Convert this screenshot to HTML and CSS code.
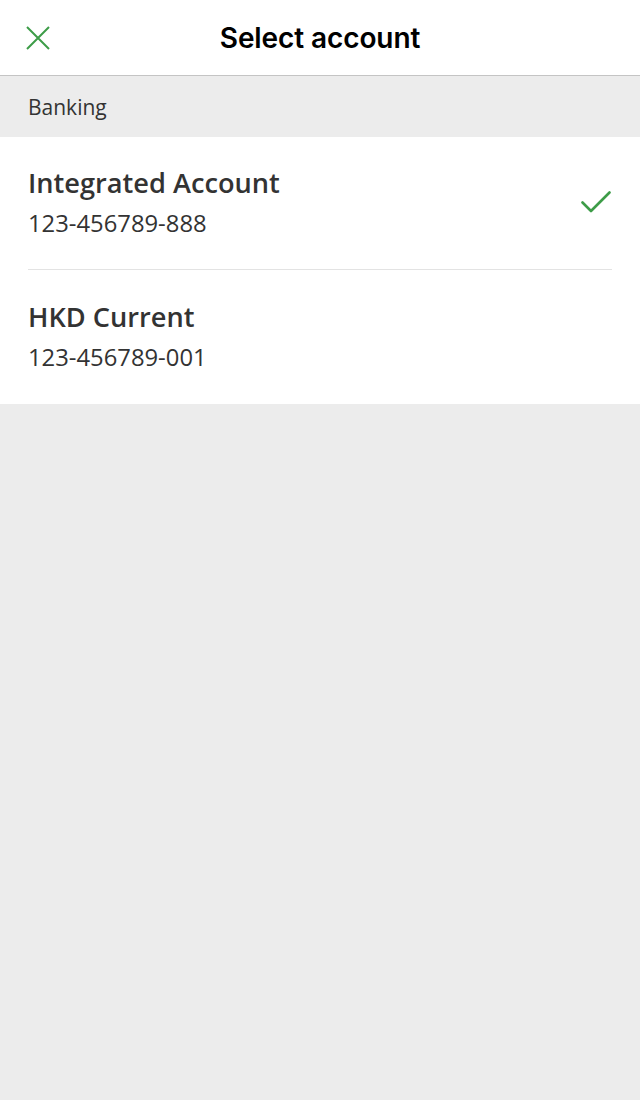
FILE: index.html
```html
<!DOCTYPE html>
<html lang="en">
<head>
<meta charset="utf-8">
<title>Select account</title>
<link rel="stylesheet" href="styles.css">
</head>
<body>
<div class="app">
  <header class="topbar">
    <button class="close" aria-label="Close">
      <svg width="24" height="24" viewBox="0 0 24 24"><path d="M1 1 L23 23 M23 1 L1 23" stroke="#3d9c48" stroke-width="2" fill="none"/></svg>
    </button>
    <h1 class="title">Select account</h1>
  </header>
  <div class="section-label">Banking</div>
  <ul class="accounts">
    <li class="account">
      <div class="info">
        <div class="name">Integrated Account</div>
        <div class="number">123-456789-888</div>
      </div>
      <svg class="check" width="30" height="24" viewBox="0 0 30 24"><path d="M1.5 11.5 L10 20 L28.5 1.5" stroke="#3d9c48" stroke-width="2.6" fill="none" stroke-linecap="round" stroke-linejoin="round"/></svg>
    </li>
    <li class="account">
      <div class="info">
        <div class="name">HKD Current</div>
        <div class="number">123-456789-001</div>
      </div>
    </li>
  </ul>
</div>
</body>
</html>
```
FILE: styles.css
```css
* { box-sizing: border-box; }
html, body { margin: 0; padding: 0; }
body {
  background: #ececec;
  width: 640px;
  height: 1100px;
  font-family: "Open Sans", "Noto Sans", sans-serif;
  color: #333333;
}
.topbar {
  position: relative;
  height: 76px;
  background: #ffffff;
  border-bottom: 1px solid #c4c4c4;
  display: flex;
  align-items: center;
  justify-content: center;
}
.close {
  position: absolute;
  left: 26px;
  top: 26px;
  width: 24px;
  height: 24px;
  padding: 0;
  border: 0;
  background: none;
  display: flex;
}
.title {
  margin: 0;
  font-family: Inter, Roboto, sans-serif;
  font-weight: 600;
  font-size: 28px;
  color: #000000;
  letter-spacing: -0.1px;
}
.section-label {
  height: 61px;
  padding-left: 28px;
  display: flex;
  align-items: center;
  font-size: 21px;
  font-weight: 500;
  color: #333333;
}
.accounts {
  list-style: none;
  margin: 0;
  padding: 0 28px;
  background: #ffffff;
}
.account {
  height: 133px;
  display: flex;
  align-items: center;
  justify-content: space-between;
  border-bottom: 1px solid #e3e3e3;
}
.account:last-child { border-bottom: 0; height: 134px; }
.info {
  display: flex;
  flex-direction: column;
  gap: 6px;
  margin-top: -2px;
}
.name {
  font-size: 27.2px;
  font-weight: 600;
  line-height: 37px;
  color: #333333;
}
.number {
  font-size: 23.8px;
  font-weight: 400;
  line-height: 33px;
  color: #333333;
}
.check { margin-right: 1px; }
```
